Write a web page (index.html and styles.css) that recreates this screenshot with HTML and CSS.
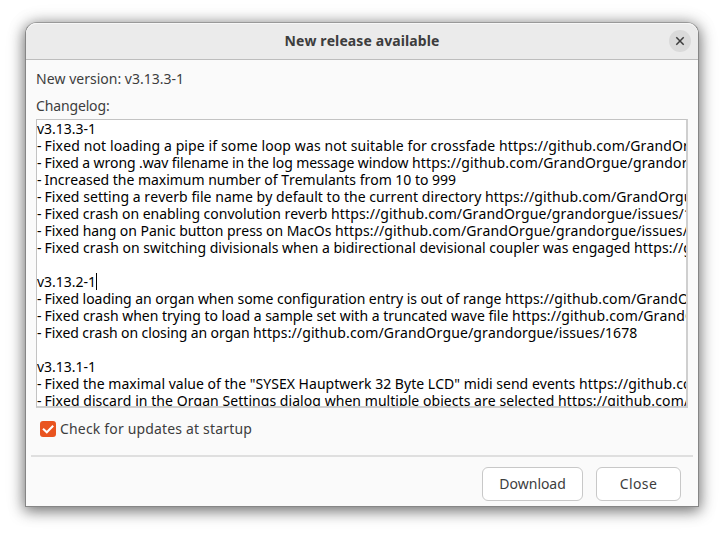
FILE: index.html
```html
<!DOCTYPE html>
<html lang="en">
<head>
<meta charset="utf-8">
<title>New release available</title>
<link rel="stylesheet" href="styles.css">
</head>
<body>
<main class="dialog">
  <header class="titlebar">
    <h1 class="title"><span data-width="155">New release available</span></h1>
    <button class="close" aria-label="Close window">
      <svg width="10" height="10" viewBox="0 0 10 10"><path d="M1.3 1.3 8.7 8.7M8.7 1.3 1.3 8.7"/></svg>
    </button>
  </header>
  <section class="content">
    <p class="label"><span data-width="148">New version: v3.13.3-1</span></p>
    <p class="label"><span data-width="73.5">Changelog:</span></p>
    <div class="log">
      <div class="line"><span data-width="59">v3.13.3-1</span></div>
      <div class="line"><span data-width="7.5">- </span><span data-width="454.5">Fixed not loading a pipe if some loop was not suitable for crossfade </span><span data-width="353">https://github.com/GrandOrgue/grandorgue/issues/</span></div>
      <div class="line"><span data-width="7.5">- </span><span data-width="367.5">Fixed a wrong .wav filename in the log message window </span><span data-width="353">https://github.com/GrandOrgue/grandorgue/issues/</span></div>
      <div class="line"><span data-width="7.5">- </span><span data-width="411.5">Increased the maximum number of Tremulants from 10 to 999</span></div>
      <div class="line"><span data-width="7.5">- </span><span data-width="440.5">Fixed setting a reverb file name by default to the current directory </span><span data-width="353">https://github.com/GrandOrgue/grandorgue/issues/</span></div>
      <div class="line"><span data-width="7.5">- </span><span data-width="286.5">Fixed crash on enabling convolution reverb </span><span data-width="361">https://github.com/GrandOrgue/grandorgue/issues/1</span></div>
      <div class="line"><span data-width="7.5">- </span><span data-width="290.5">Fixed hang on Panic button press on MacOs </span><span data-width="353">https://github.com/GrandOrgue/grandorgue/issues/</span></div>
      <div class="line"><span data-width="7.5">- </span><span data-width="589.5">Fixed crash on switching divisionals when a bidirectional devisional coupler was engaged </span><span data-width="353">https://github.com/GrandOrgue/grandorgue/issues/</span></div>
      <div class="line"></div>
      <div class="line"><span data-width="59">v3.13.2-1</span><i class="caret"></i></div>
      <div class="line"><span data-width="7.5">- </span><span data-width="460.5">Fixed loading an organ when some configuration entry is out of range </span><span data-width="353">https://github.com/GrandOrgue/grandorgue/issues/</span></div>
      <div class="line"><span data-width="7.5">- </span><span data-width="467.5">Fixed crash when trying to load a sample set with a truncated wave file </span><span data-width="353">https://github.com/GrandOrgue/grandorgue/issues/</span></div>
      <div class="line"><span data-width="7.5">- </span><span data-width="208.5">Fixed crash on closing an organ </span><span data-width="384.5">https://github.com/GrandOrgue/grandorgue/issues/1678</span></div>
      <div class="line"></div>
      <div class="line"><span data-width="59">v3.13.1-1</span></div>
      <div class="line"><span data-width="7.5">- </span><span data-width="534.5">Fixed the maximal value of the "SYSEX Hauptwerk 32 Byte LCD" midi send events </span><span data-width="353">https://github.com/GrandOrgue/grandorgue/issues/</span></div>
      <div class="line"><span data-width="7.5">- </span><span data-width="513.5">Fixed discard in the Organ Settings dialog when multiple objects are selected </span><span data-width="353">https://github.com/GrandOrgue/grandorgue/issues/</span></div>
    </div>
    <div class="check">
      <span class="box"><svg width="16" height="16" viewBox="0 0 16 16"><path d="M3 7.7 6.8 11.3 13.2 4.8"/></svg></span>
      <span class="check-text" data-width="192">Check for updates at startup</span>
    </div>
  </section>
  <footer class="actions">
    <button class="button download"><span data-width="66.5">Download</span></button>
    <button class="button dismiss"><span data-width="37.5">Close</span></button>
  </footer>
</main>
<script src="fit.js"></script>
</body>
</html>
```
FILE: styles.css
```css
* { box-sizing: border-box; }
body {
  margin: 0;
  padding: 22px 25px 28px;
  height: 535px;
  overflow: hidden;
  background: #fff;
  color: #3d3d3d;
  font: 14px/17px "Noto Sans", sans-serif;
}
.dialog {
  width: 674px;
  height: 485px;
  border: 1px solid #868686;
  border-top-color: #999;
  border-radius: 12px 12px 0 0;
  background: #fafafa;
  box-shadow: 0 3px 14px 1px rgba(0, 0, 0, .5), 0 2px 22px rgba(0, 0, 0, .12);
}
.titlebar {
  display: grid;
  grid-template-columns: 1fr auto 1fr;
  align-items: center;
  height: 37px;
  padding-right: 7px;
  padding-left: 7px;
  border-bottom: 1px solid #bdbdbd;
  border-radius: 11px 11px 0 0;
  background: #ebebeb;
  box-shadow: inset 0 1px #f7f7f7;
}
.title { grid-column: 2; margin: 0; padding-bottom: 2px; font-size: 14px; line-height: 17px; }
.close {
  display: grid;
  place-items: center;
  justify-self: end;
  width: 22px;
  height: 22px;
  padding: 0;
  border: 0;
  border-radius: 50%;
  background: #dadada;
}
.close path { fill: none; stroke: #3d3d3d; stroke-width: 1.5; }
[data-width] { white-space: pre; font-kerning: none; font-variant-ligatures: none; }
.content { padding: 10px 10px 0; }
.label { margin: 0 0 10px; height: 17px; }
.log {
  height: 289px;
  margin-top: -5px;
  overflow: hidden;
  border: 1px solid #c3c3c3;
  border-right: 2px solid #cfcfcf;
  border-bottom: 2px solid #cfcfcf;
  background: #fff;
  color: #000;
}
.line { display: flex; height: 17px; white-space: pre; }
.caret { width: 1px; height: 17px; background: #000; }
.check { display: flex; align-items: center; gap: 4px; margin: 13px 0 0 4px; height: 16px; }
.check-text { padding-bottom: 2px; }
.box { display: block; width: 16px; height: 16px; border-radius: 3px; background: #e95420; }
.box svg { display: block; }
.box path { fill: none; stroke: #fff; stroke-width: 2; }
.actions {
  display: flex;
  justify-content: flex-end;
  gap: 13px;
  margin: 18px 5px 0;
  padding: 10px 12px 0 0;
  border-top: 2px solid #dfdfdf;
}
.button {
  height: 34px;
  padding: 0 0 2px;
  border: 1px solid #c8c8c8;
  border-radius: 6px;
  background: #fff;
  color: #3d3d3d;
  font: inherit;
}
.download { width: 101px; }
.dismiss { width: 85px; }
```
FILE: fit.js
```js
// Adjusts tracking so each run of text occupies its intended width.
document.querySelectorAll("[data-width]").forEach(function (run) {
  var natural = run.getBoundingClientRect().width;
  var gap = (Number(run.dataset.width) - natural) / run.textContent.length;
  run.style.letterSpacing = gap + "px";
});
```
